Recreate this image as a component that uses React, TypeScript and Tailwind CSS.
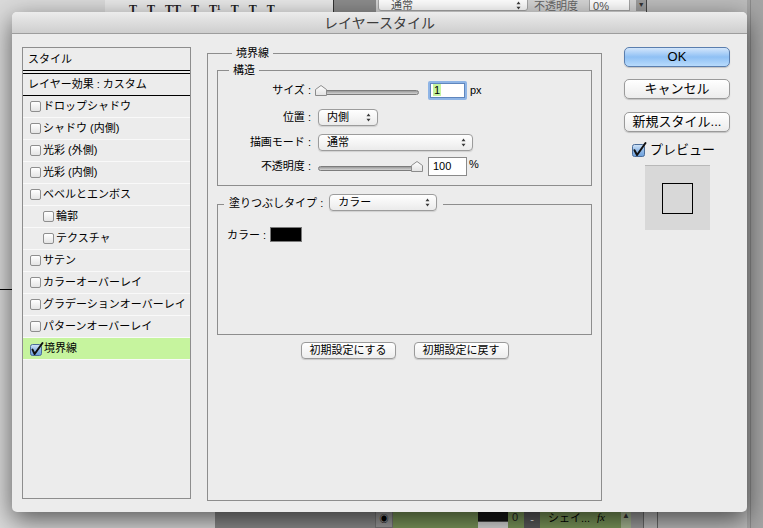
import React from "react";

const F = "font-['Liberation_Sans','Noto_Sans_CJK_JP',sans-serif]";

function Box() {
  return (
    <div className="w-[11px] h-[11px] shrink-0 rounded-[2px] border border-[#8e8e8e] bg-gradient-to-b from-white to-[#e4e4e4]" />
  );
}

function Checked({ s = 11, id }: { s?: number; id: string }) {
  return (
    <svg width={s + 2} height={s + 3} viewBox={`0 0 ${s + 2} ${s + 3}`} className="shrink-0 overflow-visible">
      <defs>
        <linearGradient id={id} x1="0" y1="0" x2="0" y2="1">
          <stop offset="0" stopColor="#d3e5f8" />
          <stop offset="0.5" stopColor="#93bbe8" />
          <stop offset="1" stopColor="#6b9fdc" />
        </linearGradient>
      </defs>
      <rect x="0.5" y="2.5" width={s} height={s} rx="2" fill={`url(#${id})`} stroke="#4b6c98" />
      <path
        d={`M2.5 ${s * 0.6 + 1} L${s * 0.42} ${s + 1} L${s + 1.5} 1`}
        fill="none"
        stroke="#111"
        strokeWidth="2"
        strokeLinecap="round"
        strokeLinejoin="round"
      />
    </svg>
  );
}

function Arrows() {
  return (
    <svg width="5" height="9" viewBox="0 0 5 9" className="shrink-0">
      <path d="M2.5 0.5 L4.5 3.2 H0.5 Z M2.5 8.5 L0.5 5.8 H4.5 Z" fill="#3a3a3a" />
    </svg>
  );
}

function Popup({ w, text }: { w: string; text: string }) {
  return (
    <div
      className={`${w} h-[17px] flex items-center justify-between rounded-[4px] border border-[#9c9c9c] bg-gradient-to-b from-white to-[#ebebeb] pl-[8px] pr-[6px] text-[11px] text-black shadow-[0_1px_1px_rgba(0,0,0,0.12)]`}
    >
      <span className="leading-none">{text}</span>
      <Arrows />
    </div>
  );
}

function Slider({ w, pos }: { w: string; pos: "left" | "right" }) {
  return (
    <div className={`relative ${w} h-[11px]`}>
      <div className="absolute left-0 right-0 bottom-[1px] h-[5px] rounded-full border border-[#7c7c7c] bg-gradient-to-b from-[#9a9a9a] to-[#d4d4d4]" />
      <svg
        width="12"
        height="11"
        viewBox="0 0 12 11"
        className={`absolute top-0 ${pos === "left" ? "left-0" : "right-0"}`}
      >
        <defs>
          <linearGradient id={`th${pos}`} x1="0" y1="0" x2="0" y2="1">
            <stop offset="0" stopColor="#ffffff" />
            <stop offset="1" stopColor="#e2e2e2" />
          </linearGradient>
        </defs>
        <path d="M6 0.5 L11.5 4.5 V10.5 H0.5 V4.5 Z" fill={`url(#th${pos})`} stroke="#8c8c8c" />
      </svg>
    </div>
  );
}

function Btn({ children, w }: { children: React.ReactNode; w: string }) {
  return (
    <div
      className={`${w} h-[17px] flex items-center justify-center rounded-[4px] border border-[#9a9a9a] bg-gradient-to-b from-white to-[#ededed] text-[11px] text-black shadow-[0_1px_1px_rgba(0,0,0,0.15)]`}
    >
      {children}
    </div>
  );
}

function BigBtn({ children, blue = false }: { children: React.ReactNode; blue?: boolean }) {
  return (
    <div
      className={`w-[106px] h-[20px] flex items-center justify-center rounded-[5px] border text-[13px] text-black shadow-[0_1px_1px_rgba(0,0,0,0.18)] ${
        blue
          ? "border-[#5a7eae] bg-gradient-to-b from-[#d3e6fb] via-[#8fc0f4] to-[#b8dbfc]"
          : "border-[#9a9a9a] bg-gradient-to-b from-white to-[#ececec]"
      }`}
    >
      {children}
    </div>
  );
}

const rows: { t: string; indent?: boolean; checked?: boolean }[] = [
  { t: "ドロップシャドウ" },
  { t: "シャドウ (内側)" },
  { t: "光彩 (外側)" },
  { t: "光彩 (内側)" },
  { t: "ベベルとエンボス" },
  { t: "輪郭", indent: true },
  { t: "テクスチャ", indent: true },
  { t: "サテン" },
  { t: "カラーオーバーレイ" },
  { t: "グラデーションオーバーレイ" },
  { t: "パターンオーバーレイ" },
  { t: "境界線", checked: true },
];

export default function App() {
  return (
    <div className={`relative w-[763px] h-[528px] overflow-hidden bg-[#bcbcbc] ${F}`}>
      {/* background application (behind the dialog) */}
      <div className="absolute left-0 top-0 w-[215px] h-full bg-[#dadada]" />
      <div className="absolute left-0 top-[289px] w-[14px] h-[1px] bg-black" />
      <div className="absolute left-[105px] top-0 w-[228px] h-[14px] bg-[#e8e8e8] flex items-start pl-[24px] gap-[10px] text-[12px] font-bold text-[#222] font-['Liberation_Serif',serif] leading-none pt-[3px]">
        <span>T</span>
        <span>T</span>
        <span>TT</span>
        <span>T</span>
        <span>T¹</span>
        <span>T</span>
        <span>T</span>
        <span>T</span>
      </div>
      <div className="absolute left-[333px] top-0 w-[1px] h-[14px] bg-[#333]" />
      <div className="absolute left-[334px] top-0 w-[42px] h-[14px] bg-[#8c8c8c]" />
      <div className="absolute left-[376px] top-0 w-[270px] h-[14px] bg-[#d4d4d4] flex items-start gap-[6px] pl-[2px]">
        <div className="w-[153px] h-[12px] -mt-[1px] rounded-b-[3px] border border-[#a6a6a6] bg-white flex items-center justify-between pl-[12px] pr-[6px] text-[11px] text-[#555]">
          <span className="leading-none">通常</span>
          <Arrows />
        </div>
        <span className="text-[11px] text-[#666] leading-none mt-[1px]">不透明度 :</span>
        <div className="w-[42px] h-[12px] -mt-[1px] border border-[#a6a6a6] bg-white text-[11px] text-[#555] leading-none pl-[3px] pt-[1px]">0%</div>
        <div className="w-[10px] h-[12px] -mt-[1px] bg-[#9c9c9c] text-[7px] text-[#333] leading-[12px] text-center">▼</div>
      </div>
      <div className="absolute left-[646px] top-0 w-[1px] h-[14px] bg-[#444]" />
      <div className="absolute left-[747px] top-0 w-[16px] h-full bg-[#a5a5a5]" />
      <div className="absolute left-[750px] top-0 w-[1px] h-full bg-[#8a8a8a]" />
      {/* bottom layer row */}
      <div className="absolute left-[215px] top-[510px] w-[160px] h-[18px] bg-[#8c8c8c]" />
      <div className="absolute left-[375px] top-[510px] w-[18px] h-[18px] bg-[#9b9b9b] border border-[#777] flex items-center justify-center text-[9px] leading-none">◉</div>
      <div className="absolute left-[393px] top-[510px] w-[228px] h-[18px] bg-[#7b975a]" />
      <div className="absolute left-[478px] top-[510px] w-[30px] h-[18px] bg-[#151515] flex flex-col justify-end">
        <div className="h-[7px] bg-[#d8d8d8] border-t border-[#555]" />
      </div>
      <div className="absolute left-[512px] top-[512px] text-[11px] leading-none text-[#222]">0</div>
      <div className="absolute left-[524px] top-[510px] w-[16px] h-[18px] bg-[#5b5b5b] flex items-center justify-center text-white text-[11px] leading-none">-</div>
      <div className="absolute left-[548px] top-[513px] text-[11px] leading-none text-black">シェイ...</div>
      <div className="absolute left-[597px] top-[512px] text-[11px] italic leading-none text-black font-['Liberation_Serif',serif]">fx</div>
      <div className="absolute left-[621px] top-[510px] w-[10px] h-[18px] bg-[#a8b894] text-[8px] leading-[12px] text-center text-[#333]">▲</div>
      <div className="absolute left-[631px] top-[510px] w-[12px] h-[18px] bg-[#9e9e9e]" />
      <div className="absolute left-[643px] top-[510px] w-[1px] h-[18px] bg-[#6a6a6a]" />
      <div className="absolute left-[657px] top-[510px] w-[1px] h-[18px] bg-[#6a6a6a]" />

      {/* dialog */}
      <div className="absolute left-[12px] top-[12px] w-[735px] h-[500px] rounded-[5px] bg-[#ececec] shadow-[0_8px_26px_rgba(0,0,0,0.6)] flex flex-col">
        <div className="h-[22px] shrink-0 rounded-t-[5px] border-b border-[#9d9d9d] bg-gradient-to-b from-[#ececec] to-[#cecece] flex items-center justify-center text-[14px] text-[#3c3c3c] leading-none">
          レイヤースタイル
        </div>
        <div className="flex items-start pt-[13px] pl-[10px] text-[11px] text-black">
          {/* left list */}
          <div className="w-[169px] h-[452px] shrink-0 border border-[#8d8d8d] flex flex-col">
            <div className="h-[23px] border-b border-black flex items-center pl-[5px] leading-none">スタイル</div>
            <div className="h-[2px]" />
            <div className="h-[23px] border-y border-black flex items-center pl-[5px] leading-none">レイヤー効果 : カスタム</div>
            {rows.map((r, i) => (
              <div
                key={i}
                className={`h-[22px] border-b border-[#f9f9f9] flex items-center leading-none ${
                  r.indent ? "pl-[20px]" : "pl-[7px]"
                } ${r.checked ? "bg-[#c6f49e] gap-[1px]" : "gap-[2px]"}`}
              >
                {r.checked ? <Checked id="cb1" /> : <Box />}
                <span>{r.t}</span>
              </div>
            ))}
          </div>

          {/* main fieldset */}
          <fieldset className="ml-[16px] -mt-px w-[395px] h-[455px] shrink-0 border border-[#8d8d8d] px-[9px]">
            <legend className="ml-[15px] px-[4px] leading-[14px]">境界線</legend>
            <fieldset className="mt-[3px] border border-[#8d8d8d] pb-[9px]">
              <legend className="ml-[11px] px-[4px] leading-[14px]">構造</legend>
              <div className="mt-[3px] h-[20px] flex items-center">
                <span className="w-[93px] text-right">サイズ :</span>
                <div className="ml-[4px]">
                  <Slider w="w-[104px]" pos="left" />
                </div>
                <div className="ml-[9px] w-[39px] h-[19px] rounded-[2px] bg-[#8fb5e6] p-[2px]">
                  <div className="w-full h-full bg-white border border-[#5f86bd] flex items-center pl-[2px]">
                    <span className="bg-[#c6f49e] leading-[12px] px-[1px]">1</span>
                  </div>
                </div>
                <span className="ml-[3px]">px</span>
              </div>
              <div className="mt-[7px] h-[20px] flex items-center">
                <span className="w-[93px] text-right">位置 :</span>
                <div className="ml-[7px]">
                  <Popup w="w-[60px]" text="内側" />
                </div>
              </div>
              <div className="mt-[5px] h-[20px] flex items-center">
                <span className="w-[93px] text-right">描画モード :</span>
                <div className="ml-[7px]">
                  <Popup w="w-[155px]" text="通常" />
                </div>
              </div>
              <div className="mt-[4px] h-[20px] flex items-center">
                <span className="w-[93px] text-right">不透明度 :</span>
                <div className="ml-[7px]">
                  <Slider w="w-[105px]" pos="right" />
                </div>
                <div className="ml-[5px] w-[39px] h-[19px] bg-white border border-[#8a8a8a] flex items-center pl-[4px]">100</div>
                <span className="ml-[2px] -mt-[3px]">%</span>
              </div>
            </fieldset>
            <fieldset className="mt-[8px] h-[141px] border border-[#8d8d8d]">
              <legend className="ml-[6px] pl-[5px] pr-[6px] pb-[4px] flex items-start">
                <span className="mt-[1px]">塗りつぶしタイプ :</span>
                <div className="ml-[6px]">
                  <Popup w="w-[108px]" text="カラー" />
                </div>
              </legend>
              <div className="mt-[11px] pl-[9px] flex items-center">
                <span>カラー :</span>
                <div className="ml-[4px] w-[32px] h-[15px] bg-black border border-[#7a7a7a]" />
              </div>
            </fieldset>
            <div className="mt-[7px] flex justify-center gap-[18px]">
              <Btn w="w-[95px]">初期設定にする</Btn>
              <Btn w="w-[95px]">初期設定に戻す</Btn>
            </div>
          </fieldset>

          {/* right column */}
          <div className="ml-[22px] w-[106px] shrink-0 flex flex-col">
            <BigBtn blue>OK</BigBtn>
            <div className="mt-[12px]">
              <BigBtn>キャンセル</BigBtn>
            </div>
            <div className="mt-[13px]">
              <BigBtn>新規スタイル...</BigBtn>
            </div>
            <div className="mt-[10px] h-[15px] pl-[8px] flex items-center gap-[4px] text-[13px] leading-none">
              <Checked s={12} id="cb2" />
              <span>プレビュー</span>
            </div>
            <div className="mt-[8px] self-center w-[65px] h-[65px] bg-[#d8d8d8] border-t border-[#b8b8b8] flex items-center justify-center">
              <div className="w-[31px] h-[31px] border border-black" />
            </div>
          </div>
        </div>
      </div>
    </div>
  );
}
